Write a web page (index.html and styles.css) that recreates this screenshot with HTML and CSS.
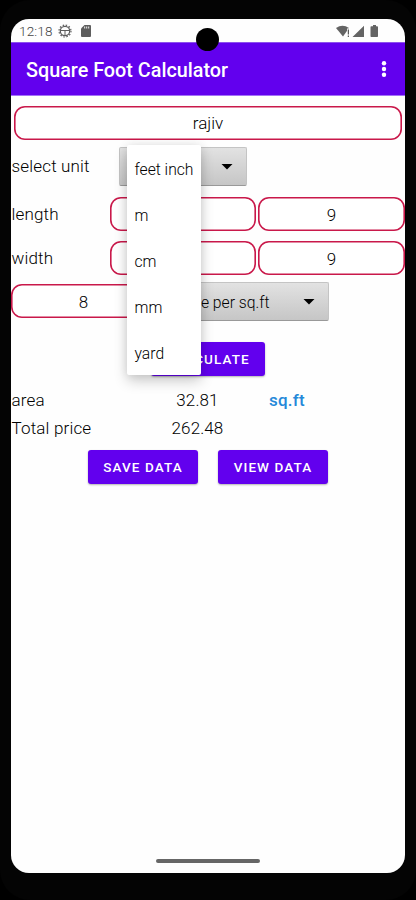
FILE: index.html
```
<!DOCTYPE html>
<html lang="en">
<head>
<meta charset="utf-8">
<title>Square Foot Calculator</title>
<link rel="stylesheet" href="styles.css">
</head>
<body>
<div class="phone">
  <span class="camera"></span>
  <main class="screen">
    <div class="status">
      <span class="clock">12:18</span>
      <svg class="gear" width="14" height="14" viewBox="0 0 14 14" fill="none" stroke="#5d5d5d"><circle cx="7" cy="7" r="4.7" stroke-width="1.3"/><circle cx="7" cy="7" r="6" stroke-width="1.2" stroke-dasharray="1.5 1.64"/><path d="M2.500 6.500h9M7 6.500v4.800"/></svg>
      <svg class="card" width="10" height="12" viewBox="0 0 10 12"><path fill="#5d5d5d" d="M3.500 0H9q1 0 1 1v10q0 1-1 1H1q-1 0-1-1V3.500z"/><path stroke="#fff" stroke-width=".9" d="M3.700 1.500v2M5.700 1.500v2M7.700 1.500v2"/></svg>
      <svg class="signals" width="43" height="13" viewBox="0 0 43 13" fill="#646464"><path d="M0 3Q6.500-1.500 13 3L7 11.500z"/><path stroke="#fff" stroke-width="2.500" d="M12.300 3.500v9"/><path stroke="#333" stroke-width="1" d="M12.300 4.500v5M12.300 10.500v1.500"/><path d="M28 .7V12H16.500zM34.500 2q0-.8.800-.8H37V0h3v1.200h1.200q.8 0 .8.800v9.200q0 .8-.8.800h-5.900q-.8 0-.8-.8z"/></svg>
    </div>
    <header class="appbar">
      <h1>Square Foot Calculator</h1>
      <svg width="6" height="18" viewBox="0 0 6 18" fill="#fff"><circle cx="3" cy="3.300" r="2.200"/><circle cx="3" cy="9" r="2.200"/><circle cx="3" cy="14.700" r="2.200"/></svg>
    </header>
    <section class="form">
      <div class="field name">rajiv</div>
      <div class="row unit">
        <span class="label">select unit</span>
        <div class="spinner"><i class="arrow"></i></div>
        <ul class="menu"><li>feet inch</li><li>m</li><li>cm</li><li>mm</li><li>yard</li></ul>
      </div>
      <div class="row size"><span class="label">length</span><div class="field"></div><div class="field">9</div></div>
      <div class="row size"><span class="label">width</span><div class="field"></div><div class="field">9</div></div>
      <div class="row price"><div class="field">8</div><div class="spinner"><span>price per sq.ft</span><i class="arrow"></i></div></div>
      <button class="btn calc">CALCULATE</button>
      <div class="row result"><span class="label">area</span><span class="value">32.81</span><b>sq.ft</b></div>
      <div class="row result"><span class="label">Total price</span><span class="value">262.48</span></div>
      <div class="row actions"><button class="btn">SAVE DATA</button><button class="btn">VIEW DATA</button></div>
    </section>
    <div class="home"></div>
  </main>
</div>
</body>
</html>
```
FILE: styles.css
```
* { box-sizing: border-box; }
body { margin: 0; background: #000; font-family: Roboto, sans-serif; font-weight: 350; color: #000; }
.phone { position: relative; width: 416px; height: 900px; padding: 19px 11px 27px; background: #040404; border-radius: 30px; }
.camera { position: absolute; z-index: 5; left: 196px; top: 28px; width: 23px; height: 23px; border-radius: 50%; background: #000; }
.screen { display: flex; flex-direction: column; height: 854px; background: #fefefe; border-radius: 18px; overflow: hidden; }
.status { display: flex; align-items: center; height: 23px; padding: 1px 26px 0 8px; }
.clock { width: 34px; font-size: 13.5px; color: #444; letter-spacing: .15px; white-space: nowrap; }
.gear { margin-left: 5px; }
.card { margin-left: 9px; }
.signals { margin-left: auto; }
.appbar { display: flex; align-items: center; justify-content: space-between; height: 54px; padding: 0 18px 0 15px; background: #6200ee; border-top: 1px solid #8d50ee; border-bottom: 1px solid #a371f7; }
h1 { margin: 0; padding-top: 3px; font-size: 19.8px; font-weight: 500; line-height: 24px; color: #fff; white-space: nowrap; }
.form { flex: 1; padding-top: 9.5px; font-size: 17px; }
.row { display: flex; align-items: center; }
.label { flex: none; white-space: nowrap; padding-left: .5px; letter-spacing: .17px; }
.field { height: 34.5px; box-shadow: inset 0 0 0 1.6px #c9184a; border-radius: 11px; display: flex; align-items: center; justify-content: center; background: #fff; padding-top: 1px; }
.name { height: 34.5px; margin: 0 3px; }
.unit { position: relative; height: 39px; margin-top: 7px; }
.unit .label { width: 108px; padding-bottom: 2px; }
.spinner { display: flex; align-items: center; justify-content: flex-end; height: 39px; background: linear-gradient(#e2e2e2, #c6c6c6); border: 1px solid #c4c4c4; border-bottom-color: #999; border-radius: 2px; padding-right: 13px; }
.unit .spinner { width: 128px; }
.arrow { width: 12px; height: 6px; background: #000; clip-path: polygon(0 0, 100% 0, 50% 100%); }
.menu { position: absolute; z-index: 3; left: 115.500px; top: -2px; width: 74.500px; height: 230px; margin: 0; padding: 1.500px 0 0 8px; list-style: none; background: #fff; border-radius: 2px; box-shadow: 0 6px 14px rgba(0,0,0,.2), 0 0 10px rgba(0,0,0,.08); font-size: 15.700px; }
.menu li { height: 46px; line-height: 46px; white-space: nowrap; }
.size { height: 35px; margin-top: 10.5px; }
.size + .size { margin-top: 9px; }
.size .label { width: 99px; }
.size .field { width: 146px; }
.size .field + .field { margin-left: 2px; width: 147px; }
.price { height: 39px; margin-top: 6.5px; }
.price .field { width: 145px; margin-top: -1px; }
.price .spinner { width: 173px; justify-content: space-between; padding-left: 11px; font-size: 15.700px; }
.price .spinner span { flex: none; width: 101.500px; padding-top: 1px; text-align: right; white-space: nowrap; }
.btn { display: flex; align-items: center; justify-content: center; height: 34px; padding: 0; border: 0; border-radius: 3px; background: #6200ee; color: #fff; font: 500 13.5px Roboto, sans-serif; letter-spacing: 1.1px; box-shadow: 0 1px 2px rgba(0,0,0,.3); white-space: nowrap; }
.calc { width: 114px; margin: 21px 0 9.5px 140px; }
.result { height: 28px; }
.result .label { width: 134px; }
.value { width: 105px; text-align: center; letter-spacing: .1px; }
.result b { margin-left: 19px; font-weight: 500; letter-spacing: .2px; color: #2589d9; }
.actions { gap: 20px; margin: 8px 0 0 77px; }
.actions .btn { width: 110px; }
.home { width: 104px; height: 4px; margin: 0 auto 10px; border-radius: 2px; background: #666; }
```
